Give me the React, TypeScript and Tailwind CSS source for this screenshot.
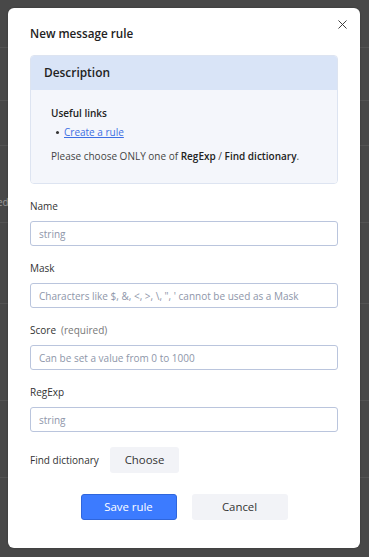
import { X } from "lucide-react"

const font = { fontFamily: '"Open Sans", "Noto Sans", sans-serif' }

function Field({ label, hint, placeholder }: { label: string; hint?: string; placeholder: string }) {
  return (
    <div className="mt-[14px]">
      <div className="h-[16px] leading-[16px] text-[10px] text-[#333]">
        {label}
        {hint && <span className="ml-[5px] text-[#777]">{hint}</span>}
      </div>
      <input
        className="mt-[7px] block h-[25px] w-full rounded-[3px] border border-[#bac5dd] bg-white px-[8px] text-[10px] text-[#333] outline-none placeholder:text-[#8e96a9]"
        placeholder={placeholder}
      />
    </div>
  )
}

export default function App() {
  const lines = [47, 100, 145, 222, 303, 400, 477]
  return (
    <div className="relative h-[557px] w-[369px] overflow-hidden bg-[#484848] p-2" style={font}>
      {/* page behind the overlay */}
      {lines.map((y) => (
        <div key={y} className="absolute left-0 right-0 h-px bg-[#545454]" style={{ top: y }} />
      ))}
      <span className="absolute left-[-3px] top-[195px] text-[10px] text-[#9a9a9a]">ed</span>

      <div className="relative h-[540px] w-[352px] rounded-[6px] bg-white px-[22px] pt-[16px] shadow-[0_0_2px_rgba(0,0,0,0.3)]">
        <button className="absolute right-[10px] top-[9px] text-[#333]">
          <X className="h-[15px] w-[15px]" strokeWidth={1.5} />
        </button>
        <h2 className="h-[18px] text-[11.7px] font-semibold leading-[18px] text-[#222]">New message rule</h2>

        <div className="mt-[13px] overflow-hidden rounded-[4px] border border-[#dde4f1]">
          <div className="flex h-[34px] items-center bg-[#d9e4f7] px-[13px] text-[11.9px] font-semibold text-[#222]">
            Description
          </div>
          <div className="bg-[#f4f6fb] px-[20px] pb-[19px] pt-[15px] text-[10px] leading-[16px] text-[#444]">
            <div className="font-semibold text-[#222]">Useful links</div>
            <div className="mt-[3px] flex items-center gap-[5px] pl-[5px]">
              <span className="h-[3px] w-[3px] rounded-full bg-[#333]" />
              <a href="#" className="text-[#3d6fe3] underline">Create a rule</a>
            </div>
            <p className="mt-[8px] whitespace-nowrap">
              Please choose ONLY one of <b className="font-semibold text-[#222]">RegExp</b> /{" "}
              <b className="font-semibold text-[#222]">Find dictionary</b>.
            </p>
          </div>
        </div>

        <Field label="Name" placeholder="string" />
        <Field label="Mask" placeholder={"Characters like $, &, <, >, \\, \", ' cannot be used as a Mask"} />
        <Field label="Score" hint="(required)" placeholder="Can be set a value from 0 to 1000" />
        <Field label="RegExp" placeholder="string" />

        <div className="mt-[15px] flex items-center">
          <span className="w-[80px] text-[10px] text-[#333]">Find dictionary</span>
          <button className="h-[26px] w-[69px] rounded-[3px] bg-[#f2f3f7] text-[11.4px] text-[#333]">Choose</button>
        </div>

        <div className="mt-[21px] flex justify-center gap-[15px]">
          <button className="h-[26px] w-[96px] rounded-[3px] border border-[#2f66dc] bg-[#3c7bff] text-[11.4px] text-white">
            Save rule
          </button>
          <button className="h-[26px] w-[96px] rounded-[3px] bg-[#f2f3f7] text-[11.4px] text-[#333]">Cancel</button>
        </div>
      </div>
    </div>
  )
}
